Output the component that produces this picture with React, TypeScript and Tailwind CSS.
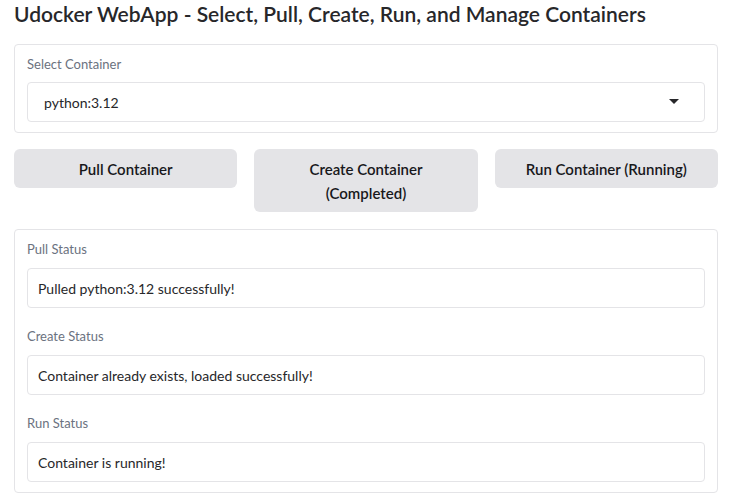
import React from "react";

const StatusField = ({ label, value }: { label: string; value: string }) => (
  <div className="flex flex-col">
    <label className="text-[13px] text-[#6b7280] leading-[18px] mb-[10px]">{label}</label>
    <div className="h-[40px] border border-[#e4e4e7] rounded-[4px] px-[10px] flex items-center text-[14px] text-[#27272a]">
      {value}
    </div>
  </div>
);

const App = () => {
  return (
    <div className="w-[729px] h-[497px] bg-white pl-[14px] pr-[11px] pt-0 font-['Lato',sans-serif] text-[#27272a] overflow-hidden">
      <h1 className="text-[21px] font-semibold leading-[28px] text-[#27272a]">
        Udocker WebApp - Select, Pull, Create, Run, and Manage Containers
      </h1>

      <div className="mt-[16px] border border-[#e4e4e7] rounded-[4px] px-[12px] pt-[10px] pb-[10px]">
        <label className="block text-[13px] text-[#6b7280] leading-[18px] mb-[9px]">Select Container</label>
        <div className="h-[40px] border border-[#e4e4e7] rounded-[4px] pl-[16px] pr-[25px] flex items-center justify-between text-[14px] text-[#27272a]">
          <span>python:3.12</span>
          <svg width="10" height="6" viewBox="0 0 10 6">
            <path d="M0 0 L10 0 L5 5 Z" fill="#27272a" />
          </svg>
        </div>
      </div>

      <div className="mt-[16px] grid grid-cols-3 gap-[17px] items-start">
        <button className="h-[39px] bg-[#e4e4e7] rounded-[6px] text-[15px] font-semibold text-[#18181b] leading-[24px]">
          Pull Container
        </button>
        <button className="h-[63px] bg-[#e4e4e7] rounded-[6px] text-[15px] font-semibold text-[#18181b] leading-[24px] px-[40px]">
          Create Container
          <br />
          (Completed)
        </button>
        <button className="h-[39px] bg-[#e4e4e7] rounded-[6px] text-[15px] font-semibold text-[#18181b] leading-[24px]">
          Run Container (Running)
        </button>
      </div>

      <div className="mt-[17px] border border-[#e4e4e7] rounded-[4px] px-[12px] pt-[10px] pb-[10px] flex flex-col gap-[19px]">
        <StatusField label="Pull Status" value="Pulled python:3.12 successfully!" />
        <StatusField label="Create Status" value="Container already exists, loaded successfully!" />
        <StatusField label="Run Status" value="Container is running!" />
      </div>
    </div>
  );
};

export default App;
